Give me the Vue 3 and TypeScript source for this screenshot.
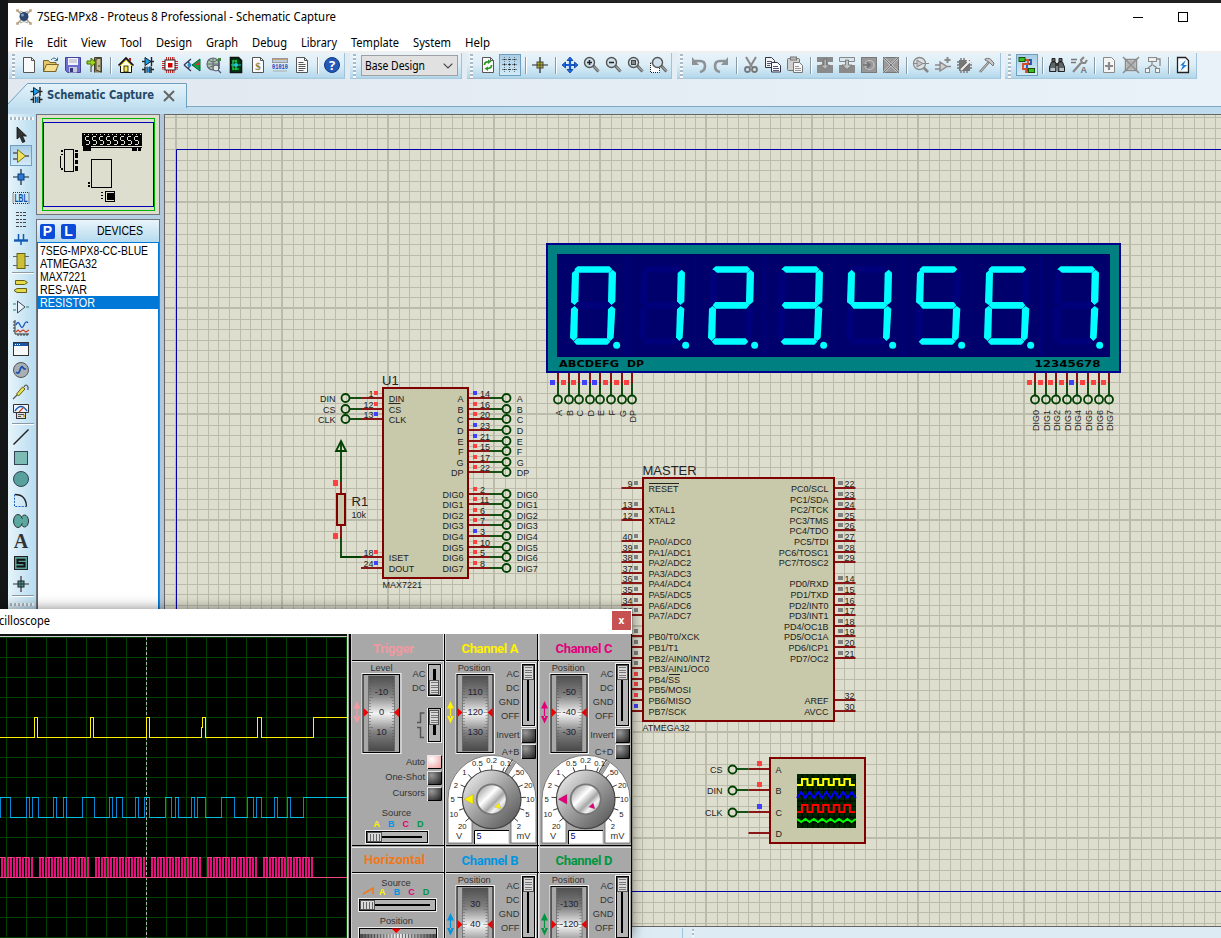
<script setup lang="ts">
import { h } from 'vue'

interface FitProps { t: string; w: number; size?: number; fill?: string; bold?: boolean; font?: string }

// Single line of text set to an exact width
const Fit = (p: FitProps) =>
  h('svg', { width: p.w, height: 18, viewBox: `0 0 ${p.w} 18`, style: 'display:block;overflow:visible' }, [
    h('text', {
      x: 0, y: 13, textLength: p.w, lengthAdjust: 'spacingAndGlyphs', fill: p.fill || '#000',
      'font-size': p.size || 12, 'font-weight': p.bold ? 700 : 400,
      'font-family': p.font || '"Noto Sans", "Open Sans", sans-serif',
    }, p.t),
  ])
Fit.props = ['t', 'w', 'size', 'fill', 'bold', 'font']

const menus: [string, number][] = [
  ['File', 18], ['Edit', 20], ['View', 25], ['Tool', 22], ['Design', 36], ['Graph', 32],
  ['Debug', 35], ['Library', 36], ['Template', 48], ['System', 38], ['Help', 25],
]

const page = '<path d="M2.5 .5h8l3 3v12h-11z" fill="#fafafa" stroke="#555"/><path d="M10.5 .5v3h3" fill="none" stroke="#555"/>'
const lens = (x: number, inner: string) =>
  `<path d="M${x + 4} 9l5 5.500" stroke="#666" stroke-width="3"/><path d="M${x + 4.5} 9.500l4.500 4.500" stroke="#c9c9c9" stroke-width="1"/><circle cx="${x}" cy="5.500" r="5" fill="#cfe0ea" stroke="#555" stroke-width="1.400"/>${inner}`

const icons: Record<string, string> = {
  new: page,
  open: '<path d="M.5 14.500v-11h5l1.500 2h6v9z" fill="#e6c468" stroke="#7a6428"/><path d="M.5 14.500l3-7h12l-3 7z" fill="#f7df90" stroke="#7a6428"/><path d="M8 3q3-4 6 0M14.500 .5v3h-3" fill="none" stroke="#3a6f92"/>',
  save: '<path d="M.5 .5h15v15h-13l-2-2z" fill="#6d6fd0" stroke="#44459a"/><rect x="3" y="1" width="10" height="7" fill="#f4f4ff"/><path d="M4 3h8M4 5h8" stroke="#aab"/><rect x="4" y="10" width="8" height="5.500" fill="#c8c8dc"/><rect x="5" y="11" width="3" height="4" fill="#33347a"/>',
  exit: '<path d="M7.500 15.500v-15h7v15" fill="#8a8060" stroke="#44402c"/><path d="M9 2l5-1v14l-5-2z" fill="#c6bc90" stroke="#44402c"/><path d="M0 4h4V1l5 4.500-5 4.500V7H0z" fill="#9bd61c" stroke="#456c08"/><path d="M4 10v5M12 8v2" stroke="#333"/>',
  home: '<path d="M2.500 8v7.500h11V8L8 2.500z" fill="#ffffd8" stroke="#111"/><path d="M.5 8.500L8 1l7.500 7.500" fill="none" stroke="#111" stroke-width="1.600"/><path d="M1.500 9.500L8 3l6.500 6.500" fill="none" stroke="#e0b000"/><rect x="6" y="9" width="4" height="6" fill="#f6e650" stroke="#111" stroke-width=".8"/><path d="M12 1v3" stroke="#b22" stroke-width="2"/>',
  schem: '<path d="M2 4.500h12" stroke="#222" stroke-width="1.400"/><path d="M5 .5v8l6-4z" fill="#18a0e8" stroke="#123"/><path d="M11.500 0v9" stroke="#222" stroke-width="1.400"/><path d="M2 12.500h3M11 12.500h3" stroke="#222" stroke-width="1.400"/><path d="M5 9.500v6.500M11 9.500v6.500" stroke="#222" stroke-width="1.500"/><rect x="6.500" y="10" width="3" height="5.500" fill="#2a90e0"/><path d="M7 9.500v6.500M9.500 9.500v6.500" stroke="#234" stroke-width=".8"/>',
  chip: '<path d="M4.500 0v16M6.500 0v16M8.500 0v16M10.500 0v16M12 0v16M0 4.500h16M0 6.500h16M0 8.500h16M0 10.500h16M0 12h16" stroke="#c01818" stroke-width=".9"/><rect x="3" y="3" width="10" height="10" fill="#fff" stroke="#222"/><rect x="6" y="6" width="4.500" height="4.500" fill="#d00000"/>',
  eye: '<path d="M0 8l7-6M0 8l7 6M4 4q3 4 0 8" fill="none" stroke="#335" stroke-width="1.300"/><circle cx="5.500" cy="8" r="2" fill="#2a8ac8"/><path d="M16 2v12l-8-6z" fill="#10a040" stroke="#064"/><path d="M16 4v4h-5z" fill="#d83030"/>',
  globe: '<circle cx="7" cy="7" r="6" fill="#a8c8a8" stroke="#667" stroke-width="1.200"/><path d="M1 7h12M7 1v12M3 3q4 4 8 0M3 11q4-4 8 0" stroke="#667" fill="none"/><circle cx="10" cy="11" r="3" fill="#dceadc" stroke="#557"/><path d="M12 13l3 3M13 2v10" stroke="#557" stroke-width="1.400"/><path d="M12 1h3v3h-3z" fill="#3a8a3a"/>',
  sim: '<path d="M2.500 .5h8l3 3v12h-11z" fill="#003a10" stroke="#111" stroke-width="1.600"/><path d="M5 3v10M5 4h4M5 12h6M8 3v3M8 10v3" stroke="#20e050" stroke-width="1.200"/><circle cx="8" cy="8" r="2" fill="#20c8d0"/><path d="M3 8h10" stroke="#20c8d0"/>',
  bill: page + '<text x="8" y="12.500" text-anchor="middle" font-size="11" font-weight="700" font-family="Liberation Serif, serif" fill="#9b7d2c">$</text>',
  code: '<rect x=".5" y="1.500" width="15" height="4" fill="#bcd" stroke="#999"/><path d="M1 2.500h14" stroke="#c8a070"/><text x="8" y="12" text-anchor="middle" textLength="16" lengthAdjust="spacingAndGlyphs" font-size="7" font-weight="700" font-family="Liberation Mono, monospace" fill="#2040b8">01010</text><path d="M1 14h14" stroke="#aaa"/>',
  doc: page + '<path d="M4.500 5.500h5M4.500 7.500h7M4.500 9.500h7M4.500 11.500h7M4.500 13.500h5" stroke="#555"/>',
  help: '<circle cx="8" cy="8" r="7.500" fill="#2358b8" stroke="#123a80"/><text x="8" y="12.700" text-anchor="middle" font-size="13" font-weight="700" font-family="Open Sans, sans-serif" fill="#fff">?</text>',
  refresh: page + '<path d="M4.500 8q0-3.500 4-3M11.500 8q0 3.500-4 3.500" fill="none" stroke="#2a9a20" stroke-width="1.700"/><path d="M8 2.500l3.500 2-3.500 2.500zM8 9.500l-3.500 2L8 14z" fill="#2a9a20"/>',
  grid: '<path d="M0 2.500h16M0 7.500h16M0 12.500h16M2.500 0v16M7.500 0v16M12.500 0v16" stroke="#6a7c88" stroke-dasharray="1 1"/><path d="M1.500 2.500h2M6.500 2.500h2M11.500 2.500h2M1.500 7.500h2M6.500 7.500h2M11.500 7.500h2M1.500 12.500h2M6.500 12.500h2M11.500 12.500h2" stroke="#222"/>',
  origin: '<path d="M8 0v16M0 8h16" stroke="#222" stroke-width="1.200"/><rect x="5" y="5" width="6" height="6" fill="#b8b020" stroke="#444"/><path d="M8 5v6M5 8h6" stroke="#333" stroke-width=".8"/>',
  pan: '<path d="M8 1v14M1 8h14" stroke="#1458d0" stroke-width="2.200"/><path d="M8 0l3 3.500H5zM8 16l3-3.500H5zM0 8l3.500-3v6zM16 8l-3.500-3v6z" fill="#1e6ae8" stroke="#0a3a90" stroke-width=".8"/>',
  zin: lens(5.5, '<path d="M3 5.500h5M5.500 3v5" stroke="#222" stroke-width="1.500"/>'),
  zout: lens(5.5, '<path d="M3 5.500h5" stroke="#222" stroke-width="1.500"/>'),
  zall: lens(5.5, '<rect x="3.500" y="3.500" width="4" height="4" fill="#888" stroke="#444"/>'),
  zarea: '<rect x=".5" y="6" width="9" height="9.500" fill="#fff" stroke="#222" stroke-dasharray="1 1"/>' + lens(7.5, ''),
  undo: '<path d="M4 4h5q5 0 5 5t-5 6" fill="none" stroke="#8d9296" stroke-width="2.600"/><path d="M1 0v8h7z" fill="#8d9296"/>',
  redo: '<path d="M12 4H7Q2 4 2 9t5 6" fill="none" stroke="#8d9296" stroke-width="2.600"/><path d="M15 0v8H8z" fill="#8d9296"/>',
  cut: '<path d="M3 0l6 10M13 0L7 10" stroke="#888" stroke-width="2"/><circle cx="4.500" cy="12.500" r="2.500" fill="none" stroke="#777" stroke-width="1.800"/><circle cx="11.500" cy="12.500" r="2.500" fill="none" stroke="#777" stroke-width="1.800"/>',
  copy: '<path d="M.5 .5h6l3 3v7h-9z" fill="#f4f4f4" stroke="#334"/><path d="M2 4.500h5M2 6.500h5M2 8.500h3" stroke="#557"/><path d="M6.500 5.500h6l3 3v6.500h-9z" fill="#fafafa" stroke="#334"/><path d="M8 9.500h5M8 11.500h6M8 13.500h6" stroke="#557"/>',
  paste: '<rect x=".5" y="1.500" width="12" height="12" rx="1" fill="#d0d0d0" stroke="#777"/><rect x="3.500" y="0" width="6" height="3" fill="#bbb" stroke="#777"/><path d="M6.500 5.500h6l3 3v7h-9z" fill="#f6f6f6" stroke="#777"/><path d="M8 9.500h4M8 11.500h6M8 13.500h6" stroke="#999"/>',
  blkcopy: '<path d="M0 0h16v5h-5v3h5v8H0V8h5V5H0z" fill="#8a8a8a"/><path d="M0 5h5v3H0zM11 5h5v3h-5z" fill="#dceaf2"/><path d="M7 2h2.500v6h3L8 12.500 3.500 8H7z" fill="#b4b4b4" stroke="#6c6c6c" stroke-width=".8"/>',
  blkmove: '<path d="M.5 .5h15v4H.5z" fill="#d8e6ee" stroke="#888"/><path d="M0 8h16v8H0z" fill="#8a8a8a"/><path d="M6.500 3h3v5h3.500L8 12.500 3 8h3.500z" fill="#c4c4c4" stroke="#6c6c6c" stroke-width=".8"/>',
  blkrot: '<rect x=".5" y=".5" width="15" height="15" fill="#979797" stroke="#7a7a7a"/><circle cx="8.500" cy="8" r="4.500" fill="none" stroke="#c4c4c4" stroke-width="1.200"/><path d="M2 8h7M6 5l3 3-3 3" stroke="#707070" stroke-width="1.400" fill="none"/>',
  blkdel: '<rect x=".5" y=".5" width="15" height="15" fill="#9a9a9a" stroke="#777"/><path d="M1 1l14 14M15 1L1 15" stroke="#c4c4c4" stroke-width="2.400"/><path d="M1 1l14 14M15 1L1 15" stroke="#777"/>',
  pick: '<path d="M10 10l5 5" stroke="#888" stroke-width="2.600"/><circle cx="6.500" cy="6.500" r="6" fill="#dce4e8" stroke="#8a8a8a" stroke-width="1.300"/><path d="M4 3v7l6-3.500zM0 6.500h4M10 6.500h6" stroke="#888" fill="#c4c4c4"/>',
  make: '<path d="M5 5v9l7-4.500zM0 8h5M0 12h5M12 9.500h4" stroke="#8a8a8a" stroke-width="1.400" fill="#cfcfcf"/><path d="M12.500 0v6M9.500 3h6" stroke="#8a8a8a" stroke-width="2"/>',
  pack: '<path d="M2 3h11v11H2z" fill="#777"/><path d="M0 5h2M0 8h2M0 11h2M13 5h2M13 8h2M13 11h2M4 1v2M7 1v2M4 14v2M7 14v2M10 14v2" stroke="#777" stroke-width="1.400"/><path d="M4 13l8-8" stroke="#666" stroke-width="3.600"/><path d="M4 13l8-8M12 .5l-1.500 4 1 1 4-1.500" stroke="#efefef" stroke-width="2" fill="none"/>',
  decomp: '<path d="M1 15l9-10" stroke="#777" stroke-width="2.600"/><path d="M1.500 14.500l8-9" stroke="#ccc"/><path d="M6 2q5-2 7 2l2 2-1 3-4-4-4-2z" fill="#c8c8c8" stroke="#777"/>',
  wire: '<path d="M8 3h4v4H8v7h5" fill="none" stroke="#1a56b8" stroke-width="1.800"/><path d="M6 3h3v4H4v5h3v3h3" fill="none" stroke="#d84a28" stroke-width="1.800"/><rect x="0" y=".5" width="6" height="4" fill="#3cc020" stroke="#145008"/><rect x="9.500" y="11.500" width="6" height="4" fill="#3cc020" stroke="#145008"/>',
  binoc: '<path d="M3 1.500h3v3H3zM10 1.500h3v3h-3z" fill="#666" stroke="#222"/><path d="M2.500 5h4l.5 4v5.500H.5V10zM9.500 5h4l2 5v4.500H9V9z" fill="#5c6468" stroke="#222"/><path d="M6.500 6h3v3h-3z" fill="#333"/><path d="M1.500 11h4.500v3H1.500zM10.500 11H15v3h-4.500z" fill="#b8c4c8"/>',
  prop: '<path d="M0 2.500h6M0 5.500h5" stroke="#777" stroke-width="1.300"/><path d="M2 15l8-9M13 0l-3 3 1 3 3 0 2-3" stroke="#888" stroke-width="2.200" fill="none"/><text x="9.500" y="16" font-size="9" font-weight="700" font-family="Liberation Sans, sans-serif" fill="#777">A</text>',
  addsheet: '<path d="M2.500 .5h8l3 3v12h-11z" fill="#f4f4f4" stroke="#8a8a8a"/><path d="M8 5v8M4 9h8" stroke="#8a8a8a" stroke-width="2.200"/>',
  delsheet: '<rect x="2.500" y="2.500" width="11" height="11" fill="#ccc" stroke="#8a8a8a" stroke-width="1.400"/><path d="M0 0l16 16M16 0L0 16" stroke="#8a8a8a" stroke-width="1.500"/><rect x="5" y="5" width="6" height="6" fill="none" stroke="#999"/>',
  hier: '<rect x="3.500" y=".5" width="8" height="4" fill="#eee" stroke="#888"/><path d="M7 5v3L3 11M8 8l4 3M11 2h4v7" fill="none" stroke="#888" stroke-width="1.300"/><rect x=".5" y="11.500" width="4" height="4" fill="#f4f4f4" stroke="#888"/><rect x="10.500" y="11.500" width="4" height="4" fill="#f4f4f4" stroke="#888"/>',
  erc: '<path d="M2.500 .5h8l3 3v12h-11z" fill="#f6fbff" stroke="#222" stroke-width="1.300"/><path d="M11 3L5 8.500h3L5.500 14 12 8H8.500z" fill="#1a7ad8"/>',
  arrow: '<path d="M4 0v12l3-2.500 2.500 6 2.500-1-2.500-5.500h4z" fill="#333" stroke="#111" stroke-width=".8"/>',
  comp: '<path d="M0 5h4M0 11h4M12 8h4" stroke="#556" stroke-width="1.400"/><path d="M4.500 1.500v13L12.500 8z" fill="#f0e25a" stroke="#77701a"/>',
  junc: '<path d="M8 0v16M0 8h16" stroke="#123" stroke-width="1.200"/><rect x="5" y="5" width="6" height="6" fill="#2a7ad0" stroke="#0a3a80"/>',
  lbl: '<rect x="0" y="2.500" width="16" height="11" fill="none" stroke="#333" stroke-dasharray="1 1"/><text x="8" y="11.800" text-anchor="middle" textLength="13" lengthAdjust="spacingAndGlyphs" font-size="10" font-weight="700" font-family="Liberation Sans, sans-serif" fill="#0a4aa8">LBL</text>',
  script: '<path d="M3 1.500h11M3 4.500h11M3 8.500h11M3 11.500h11M3 15.500h11" stroke="#444" stroke-dasharray="3 1 2 1"/>',
  bus: '<path d="M1 8.500h14" stroke="#1258b8" stroke-width="2.400"/><path d="M5.500 2v6M10.500 2v6M8 8v5" stroke="#1258b8" stroke-width="1.500"/>',
  sub: '<path d="M0 3.500h16M0 12.500h16" stroke="#666"/><rect x="4" y=".5" width="8" height="15" fill="#c9c038" stroke="#666018"/>',
  term: '<path d="M2.500 2.500h9l3 2-3 2h-9zM4 10.500h9.500v4H4l-3-2z" fill="#e4d84c" stroke="#665f14"/>',
  pin: '<path d="M0 5h3M0 11h3M13 8h3" stroke="#286" stroke-width="1.200"/><path d="M4.500 2v12L12 8z" fill="#e8f4fa" stroke="#445"/>',
  graph: '<path d="M2 0v14h14M0 2h2M0 5h2M0 8h2M0 11h2M5 14v2M8 14v2M11 14v2M14 14v2" stroke="#333" fill="none"/><path d="M3 5q2-5 4 0t4 0 4-2" fill="none" stroke="#1a56b8" stroke-width="1.300"/><path d="M3 12l2-2 2 2 3-2 3 2 3-2" fill="none" stroke="#d04020" stroke-width="1.200"/>',
  popup: '<rect x=".5" y="1.500" width="15" height="13" fill="#f8f8f8" stroke="#333"/><path d="M1 3.500h14" stroke="#1a56a8" stroke-width="3"/><path d="M2 3.500h5" stroke="#fff" stroke-dasharray="1 1"/>',
  gen: '<circle cx="8" cy="8" r="7.500" fill="#a8b0b4" stroke="#555"/><path d="M3 10q2.500 3 4-2t3-2.500T13 6.500" fill="none" stroke="#1a50b0" stroke-width="1.700"/>',
  probe: '<path d="M0 16l5-5M11 4q2-4 4 0v3" fill="none" stroke="#555" stroke-width="1.200"/><path d="M3.500 11l6-7 2.500 2-6.500 7z" fill="#e8e050" stroke="#666018"/>',
  instr: '<path d="M.5 .5h15v8h-3v6h-9v-6h-3z" fill="#f0f4f6" stroke="#333"/><path d="M2 7q6-9 12 0" fill="none" stroke="#1a60c0" stroke-width="1.500"/><path d="M6 8l5-5" stroke="#d04020" stroke-width="1.300"/><rect x="3.500" y="8.500" width="9" height="6" fill="#ddd" stroke="#333"/><path d="M5 10.500h6M5 12.500h3" stroke="#555"/><path d="M10 12h2" stroke="#d8b000" stroke-width="2"/>',
  line: '<path d="M.5 15.500l15-15" stroke="#222" stroke-width="1.400"/>',
  box: '<rect x="1.500" y="1.500" width="13" height="13" fill="#7cbcb4" stroke="#345"/>',
  circ: '<circle cx="8" cy="8" r="7.500" fill="#58a09c" stroke="#345"/>',
  arc: '<path d="M1.500 2.500v12h12" fill="none" stroke="#1a60b8" stroke-dasharray="2 1.200"/><path d="M2 2.500q11 0 11.500 12" fill="none" stroke="#222" stroke-width="1.300"/>',
  path: '<ellipse cx="11.500" cy="8" rx="4" ry="6" fill="#5aa8a0" stroke="#333"/><ellipse cx="5" cy="8" rx="4.500" ry="6.500" fill="#5aa8a0" stroke="#333"/><path d="M7 6h3v4H7z" fill="#5aa8a0"/>',
  text: '<text x="8" y="14" text-anchor="middle" font-size="20" font-weight="700" font-family="Liberation Serif, serif" fill="#333">A</text>',
  sym: '<rect x="1.500" y="1.500" width="13" height="13" fill="#5aa098" stroke="#222"/><path d="M12.500 4.700h-8v3.300h7v3.500h-8" fill="none" stroke="#111" stroke-width="2"/>',
  mark: '<path d="M8 0v16M0 8h16" stroke="#333" stroke-width="1.200"/><rect x="5" y="5" width="6" height="6" fill="#4a9c94" stroke="#222"/><path d="M5 8h6M8 5v6" stroke="#222" stroke-width=".8"/>',
}

const bars = [
  { w: 336, pad: 0, items: ['new', 'open', 'save', 'exit', '||', 'home', 'schem', 'chip', 'eye', 'globe', 'sim', 'bill', 'code', 'doc', '|', 'help'], gap: 5 },
  { w: 112, pad: 0, items: ['combo'], gap: 5 },
  { w: 205, pad: 1, items: ['refresh', '*grid', '|', 'origin', '|', 'pan', 'zin', 'zout', 'zall', 'zarea'], gap: 5 },
  { w: 324, pad: 2, items: ['undo', 'redo', '|', 'cut', 'copy', 'paste', '|', 'blkcopy', 'blkmove', 'blkrot', 'blkdel', '|', 'pick', 'make', 'pack', 'decomp'], gap: 4 },
  { w: 192, pad: 2, items: ['*wire', '|', 'binoc', 'prop', '|', 'addsheet', 'delsheet', 'hier', '|', 'erc'], gap: 0 },
]

const tools = ['arrow', '*comp', 'junc', 'lbl', 'script', 'bus', 'sub', '|', 'term', 'pin', 'graph', 'popup', 'gen', 'probe', 'instr', '|',
  'line', 'box', 'circ', 'arc', 'path', 'text', 'sym', 'mark', '|']

const devices: [string, number][] = [['7SEG-MPX8-CC-BLUE', 108], ['ATMEGA32', 57], ['MAX7221', 46], ['RES-VAR', 47], ['RESISTOR', 55]]

// Sheet grid
const gx: { p: number; w: number }[] = []
for (let k = -60; k < 40; k++) {
  const p = Math.round(812 + k * 10.6)
  if (p > 165 && p < 1222) gx.push({ p: k % 10 === 0 ? 811 + Math.round(k * 10.6) : p, w: k % 10 === 0 ? 2 : 1 })
}
const gy: { p: number; w: number }[] = []
for (let k = -30; k < 50; k++) {
  const p = Math.round(414 + k * 10.6)
  if (p > 114 && p < 926) gy.push({ p: k % 10 === 0 ? p - 1 : p, w: k % 10 === 0 ? 2 : 1 })
}

const R = '#ff4040', B = '#4040ff', G = '#808080'
const py = (base: number, k: number) => Math.round(base + k * 10.6)

const u1Right = 'A:14:B B:16:R C:20:R D:23:B E:21:B F:15:R G:17:R DP:22:R _ DIG0:2:R DIG1:11:R DIG2:6:R DIG3:7:R DIG4:3:B DIG5:10:R DIG6:5:R DIG7:8:R'
  .split(' ').map((s, k) => { const [n, num, c] = s.split(':'); return { n, num, c: c === 'B' ? B : R, y: py(398.2, k) } }).filter(p => p.num)
const u1Left = [
  { n: 'DIN', num: '1', c: R, k: 0, net: 'DIN' }, { n: 'CS', num: '12', c: R, k: 1, net: 'CS' }, { n: 'CLK', num: '13', c: B, k: 2, net: 'CLK' },
  { n: 'ISET', num: '18', c: R, k: 15, net: '' }, { n: 'DOUT', num: '24', c: B, k: 16, net: '' },
].map(p => ({ ...p, y: py(398.2, p.k) }))

const mL = ('RESET:9 _ XTAL1:13 XTAL2:12 _ PA0/ADC0:40 PA1/ADC1:39 PA2/ADC2:38 PA3/ADC3:37 PA4/ADC4:36 PA5/ADC5:35 PA6/ADC6:34 PA7/ADC7:33 _ ' +
  'PB0/T0/XCK PB1/T1 PB2/AIN0/INT2 PB3/AIN1/OC0 PB4/SS PB5/MOSI PB6/MISO PB7/SCK').split(' ')
  .map((s, k) => { const [n, num] = s.split(':'); return { n, num: num || '', y: py(488, k), c: k === 21 ? B : k >= 18 ? R : G } }).filter(p => p.n !== '_')
const mR = ('PC0/SCL:22 PC1/SDA:23 PC2/TCK:24 PC3/TMS:25 PC4/TDO:26 PC5/TDI:27 PC6/TOSC1:28 PC7/TOSC2:29 _ ' +
  'PD0/RXD:14 PD1/TXD:15 PD2/INT0:16 PD3/INT1:17 PD4/OC1B:18 PD5/OC1A:19 PD6/ICP1:20 PD7/OC2:21 _ _ _ AREF:32 AVCC:30').split(' ')
  .map((s, k) => { const [n, num] = s.split(':'); return { n, num, y: py(488, k), sq: k < 20 } }).filter(p => p.n !== '_')

const segs: Record<string, string> = {
  a: '103,103 113,94 208,94 217,103 208,113 115,113',
  b: '218,104 228,113 226,200 214,210 204,201 206,114',
  c: '215,213 226,221 221,308 211,318 201,309 204,222',
  d: '101,320 111,310 203,310 211,320 202,329 110,329',
  e: '104,213 114,222 112,307 101,318 90,308 93,221',
  f: '107,104 117,114 115,202 104,210 93,202 96,114',
  g: '104,211 112,201 206,201 214,211 205,221 113,221',
}
const digits = ['abcdef', 'bc', 'abdeg', 'abcdg', 'bcfg', 'acdfg', 'acdefg', 'abc']

const dispPins = [
  ...['A', 'B', 'C', 'D', 'E', 'F', 'G', 'DP'].map((n, i) => ({ n, x: py(558, i), c: 'ADE'.includes(n) ? B : R })),
  ...[0, 1, 2, 3, 4, 5, 6, 7].map(i => ({ n: 'DIG' + i, x: py(1035, i), c: i === 4 ? B : R })),
]
const oscPins = [{ n: 'A', net: 'CS', y: 769, c: R }, { n: 'B', net: 'DIN', y: 790, c: R }, { n: 'C', net: 'CLK', y: 812, c: B }, { n: 'D', net: '', y: 833, c: '' }]

const square = (x0: number, n: number, hi: number, lo: number) => {
  let d = `M${x0} ${lo}h5`
  for (let i = 0; i < n; i++) d += `V${hi}h5.500V${lo}h${i === n - 1 ? 5 : 5.1}`
  return d
}
const zig = (x0: number, n: number, step: number, y0: number, y1: number) =>
  'M' + Array.from({ length: n }, (_, i) => `${x0 + i * step} ${i % 2 ? y1 : y0}`).join('L')

// Oscilloscope traces
const t3 = (v: number) => v / 3
const yellow = (() => {
  let d = 'M0 737.5'
  for (const [a, b] of [[103, 112], [271, 280], [440, 448], [606, 616], [772, 784]]) {
    const x = Math.floor(t3(a)) + 0.5, x2 = Math.floor(t3(b)) + 0.5
    d += a === 606 ? `H${x - 1}V727.5H${x}V717.5H${x2}V737.5` : `H${x}V717.5H${x2}V737.5`
  }
  return d + 'H313.5V717.5H347'
})()
const blueHi = [[1, 31], [79, 88], [97, 115], [160, 169], [190, 199], [247, 283], [328, 337], [349, 367], [406, 415], [433, 448], [496, 515],
  [526, 535], [575, 583], [592, 617], [664, 703], [742, 760], [769, 784], [823, 832], [862, 871], [910, 1038]].map(p => p.map(v => Math.floor(t3(v))))
const blueLo = blueHi.slice(1).map((p, i) => [blueHi[i][1], p[0]])
const clocks = [[-52, 98], [117, 267], [285, 435], [453, 603], [621, 771], [789, 939]].flatMap(([a, b]) =>
  Array.from({ length: 17 }, (_, i) => ({ x: Math.round(a / 3) + i * 3, w: 2 })))

const range = (n: number) => Array.from({ length: n }, (_, i) => i)

const channels = [
  { n: 'A', c: '#fff200', dx: 0, dy: 0, v: ['110', '120', '130'], mix: 'A+B' },
  { n: 'C', c: '#e2007a', dx: 94, dy: 0, v: ['-50', '-40', '-30'], mix: 'C+D' },
  { n: 'B', c: '#0095e0', dx: 0, dy: 212, v: ['30', '40'], mix: '' },
  { n: 'D', c: '#009640', dx: 94, dy: 212, v: ['-130', '-120'], mix: '' },
]
const dials = [
  { x: 362.5, w: 38, dy: 0, v: ['-10', '0', '10'], c: '#f49aa2', ax: 357 },
  ...channels.map(c => ({ x: 456.5 + c.dx, w: 37.5, dy: c.dy, v: c.v, c: c.c, ax: 450.5 + c.dx })),
]
const dialMarks: [string, number, number][] = [
  ['0.5', 397, 474], ['0.2', 440, 466], ['0.1', 482, 474], ['50', 525, 502], ['20', 550, 541], ['10', 556, 583], ['5', 547, 627],
  ['2', 522, 663], ['1', 358, 502], ['2', 333, 541], ['5', 323, 583], ['10', 326, 627], ['20', 352, 663],
]
const ticks = range(13).map(i => -220 + i * (260 / 12))
const letters = [['A', '#fff200'], ['B', '#0095e0'], ['C', '#e2007a'], ['D', '#009640']]
const trigButtons: [string, number, number][] = [['Auto', 755, 765], ['One-Shot', 771, 779.7], ['Cursors', 787, 795.7]]
</script>

<template>
  <div class="desk">
    <div class="window">
      <header class="title">
        <svg class="logo" width="16" height="16" viewBox="0 0 16 16">
          <path d="M1 1l14 14M15 1L1 15" stroke="#b09a78" stroke-width="1.600" />
          <path d="M4 2q4 3 8 0M4 14q4-3 8 0" stroke="#9aa" fill="none" />
          <circle cx="8" cy="7.500" r="4.500" fill="#2c466e" /><circle cx="6.500" cy="6" r="1.500" fill="#7d9cc4" />
          <path d="M0 0h3v3H0zM13 0h3v3h-3zM0 13h3v3H0zM13 13h3v3h-3z" fill="#b8a078" opacity=".6" />
        </svg>
        <Fit t="7SEG-MPx8 - Proteus 8 Professional - Schematic Capture" :w="299" />
        <span class="spacer"></span>
        <svg class="winbtns" width="60" height="14" viewBox="0 0 60 14"><path d="M0 7.500h10" stroke="#000" /><rect x="45.500" y="2.500" width="9" height="9" fill="none" stroke="#000" /></svg>
      </header>
      <nav class="menu"><Fit v-for="m in menus" :key="m[0]" :t="m[0]" :w="m[1]" /></nav>
      <div class="bars">
        <div v-for="(b, i) in bars" :key="i" class="bar" :style="{ width: b.w + 'px', marginRight: b.gap + 'px' }">
          <span class="grip" :style="{ marginRight: 3 + b.pad + 'px' }"></span>
          <template v-for="(it, j) in b.items" :key="j">
            <span v-if="it[0] === '|'" class="sep" :class="{ wide: it === '||' }"></span>
            <span v-else-if="it === 'combo'" class="combo">
              <Fit t="Base Design" :w="60" />
              <svg width="10" height="6" viewBox="0 0 10 6"><path d="M.7 .7L5 5 9.300 .7" fill="none" stroke="#444" stroke-width="1.200" /></svg>
            </span>
            <span v-else class="cell" :class="{ on: it[0] === '*' }">
              <svg width="16" height="16" viewBox="0 0 16 16" v-html="icons[it.replace('*', '')]"></svg>
            </span>
          </template>
        </div>
      </div>
      <div class="tabs">
        <div class="tab">
          <svg class="tabshape" width="179" height="25" viewBox="0 0 179 25">
            <defs><linearGradient id="tg" x2="0" y2="1"><stop offset="0" stop-color="#e6f3fa" /><stop offset="1" stop-color="#bfdff0" /></linearGradient></defs>
            <path d="M0 25V21L19.500 .5H178.500V25" fill="url(#tg)" /><path d="M0 21L19.500 .5H178.500V25" fill="none" stroke="#6f9fbe" />
          </svg>
          <span class="tabin">
            <svg width="13" height="16" viewBox="1.500 0 13 16" v-html="icons.schem"></svg>
            <Fit t="Schematic Capture" :w="107" :bold="true" fill="#24486a" :size="11.500" font='"DejaVu Sans", sans-serif' />
            <svg width="12" height="12" viewBox="0 0 12 12"><path d="M1 1l10 10M11 1L1 11" stroke="#666" stroke-width="2" /></svg>
          </span>
        </div>
      </div>
      <div class="strip"></div>
      <main class="body">
        <aside class="tools">
          <span class="hgrip"></span>
          <template v-for="(it, j) in tools" :key="j">
            <span v-if="it === '|'" class="hsep"></span>
            <span v-else class="tcell" :class="{ on: it[0] === '*' }">
              <svg width="16" height="16" viewBox="0 0 16 16" v-html="icons[it.replace('*', '')]"></svg>
            </span>
          </template>
          <span class="hgrip low"></span>
        </aside>
        <section class="side">
          <svg class="overview" width="122" height="99" viewBox="37 115 122 99" shape-rendering="crispEdges">
            <rect x="42.500" y="118.500" width="112" height="92" fill="none" stroke="#00b400" />
            <rect x="43.500" y="122.500" width="110" height="84" fill="none" stroke="#0000b4" />
            <path d="M82 133h60v13H82zM83 146h8v5h-8zM132 148h5v3h-5zM138 148h3v3h-3z" />
            <path d="M91 147.500h51" stroke="#000" />
            <path d="M84 134.500h57" stroke="#dedece" stroke-dasharray="1 3" />
            <g v-for="i in 8" :key="i" stroke="#dedece"><path :d="`M${78.500 + i * 7} 137v3M${82.500 + i * 7} 141v3M${79 + i * 7} 140.500h3M${79 + i * 7} 136.500h3M${79 + i * 7} 144.500h3`" /></g>
            <rect x="64.500" y="149.500" width="9" height="22" fill="none" stroke="#000" />
            <path d="M61 150h2v2h-2zM60 156h1v12h-1zM61 154h2v1h-2zM61 168h2v2h-2zM75 150h3v2h-3zM75 153h3v5h-3zM75 160h3v4h-3zM75 166h3v5h-3z" />
            <rect x="91.500" y="159.500" width="20" height="28" fill="none" stroke="#000" />
            <path d="M88 182h2v2h-2zM88 185h2v2h-2zM101 192h2v1h-2zM101 195h2v1h-2zM101 198h2v1h-2z" />
            <rect x="105.500" y="191.500" width="9" height="10" fill="none" stroke="#000" /><path d="M107 193h7v7h-7z" />
          </svg>
          <div class="devices">
            <div class="dhead"><b>P</b><b>L</b><Fit t="DEVICES" :w="46" font='"Liberation Sans", sans-serif' /></div>
            <ul>
              <li v-for="(d, i) in devices" :key="d[0]" :class="{ sel: i === 4 }">
                <Fit :t="d[0]" :w="d[1]" :fill="i === 4 ? '#fff' : '#000'" font='"Liberation Sans", sans-serif' />
              </li>
            </ul>
          </div>
        </section>
        <div class="split"></div>
        <section class="right">
          <svg class="sheet" width="1056" height="811" viewBox="165 115 1056 811">
            <g shape-rendering="crispEdges" fill="#bbbbab">
              <rect v-for="g in gx" :key="'x' + g.p" :x="g.p" y="115" :width="g.w" height="811" />
              <rect v-for="g in gy" :key="'y' + g.p" x="165" :y="g.p" width="1056" :height="g.w" />
            </g>
            <path d="M1221 149.500H176.500V891.500H1221" fill="none" stroke="#0000a8" />

            <g class="part">
              <rect x="383" y="388" width="85" height="190" />
              <text x="382" y="385" class="big">U1</text><text x="382.500" y="588">MAX7221</text>
              <g v-for="p in u1Left" :key="p.n">
                <path class="r" :d="`M361 ${p.y}H383`" />
                <text x="373.500" :y="p.y - 1.500" class="e">{{ p.num }}</text>
                <path :d="`M374 ${p.y - 7}h4v4h-4z`" :fill="p.c" />
                <text x="388.700" :y="p.y + 3.500">{{ p.n }}</text>
                <template v-if="p.net"><path class="g" :d="`M350 ${p.y}H361`" /><circle cx="345.500" :cy="p.y" r="4" /><text x="335.500" :y="p.y + 3.500" class="e">{{ p.net }}</text></template>
              </g>
              <path d="M388.500 403.500h12" stroke="#222" />
              <g v-for="p in u1Right" :key="p.n">
                <path class="r" :d="`M469 ${p.y}H490`" /><path class="g" :d="`M490 ${p.y}H502.500`" />
                <circle cx="506.500" :cy="p.y" r="4" />
                <text x="480" :y="p.y - 1.500">{{ p.num }}</text>
                <path :d="`M473 ${p.y - 7}h4v4h-4z`" :fill="p.c" />
                <text x="463.500" :y="p.y + 3.500" class="e">{{ p.n }}</text><text x="516.700" :y="p.y + 3.500">{{ p.n }}</text>
              </g>
              <path class="g" d="M341 441V482M341 537V557H361" /><path class="g" d="M341 441l5 10h-10z" />
              <path class="r" d="M341 482V494M341 525V538" /><rect x="337" y="494" width="8" height="31" />
              <path d="M333 480h5v6h-5zM333 533h5v6h-5z" fill="#ff4040" />
              <text x="351.500" y="506" class="big">R1</text><text x="351.500" y="517.700">10k</text>
            </g>

            <g>
              <rect x="547" y="244" width="573" height="128" fill="#008080" stroke="#00008c" stroke-width="2" />
              <rect x="557.500" y="254.500" width="552" height="102" fill="#00006c" stroke="#000060" />
              <path v-for="i in 7" :key="i" :d="`M${557 + i * 69}.500 255V356`" stroke="#00007c" />
              <g v-for="(d, i) in digits" :key="'d' + i" :transform="`translate(${540 + i * 69} 235) scale(.33333)`">
                <polygon v-for="(pts, s) in segs" :key="s" :points="pts" :fill="d.includes(String(s)) ? '#00ffff' : '#00007a'" />
                <circle cx="230" cy="331" r="10.500" fill="#00ffff" />
              </g>
              <g class="lab">
                <text x="559" y="366.500" textLength="60" lengthAdjust="spacingAndGlyphs">ABCDEFG</text><text x="627" y="366.500" textLength="17" lengthAdjust="spacingAndGlyphs">DP</text>
                <text x="1034.500" y="366.800" textLength="66" lengthAdjust="spacingAndGlyphs">12345678</text>
              </g>
              <g v-for="p in dispPins" :key="p.n" class="part">
                <path class="r" :d="`M${p.x} 373V383`" /><path class="g" :d="`M${p.x} 383V395`" /><circle :cx="p.x" cy="399.500" r="4" />
                <path :d="`M${p.x - 8} 380h5v5h-5z`" :fill="p.c" />
                <text class="e" :transform="`translate(${p.x + 3.500} 410) rotate(-90)`">{{ p.n }}</text>
              </g>
            </g>

            <g class="part">
              <rect x="643" y="478" width="191" height="243" />
              <text x="642.500" y="475" class="big">MASTER</text><text x="642.500" y="731">ATMEGA32</text>
              <g v-for="p in mL" :key="p.n">
                <path class="r" :d="`M621.500 ${p.y}H642`" /><text x="632.500" :y="p.y - 1.500" class="e">{{ p.num }}</text>
                <path :d="`M634 ${p.y - 7}h4v4h-4z`" :fill="p.c" /><text x="648.500" :y="p.y + 3.500">{{ p.n }}</text>
              </g>
              <path d="M649 483.500h30M669 674.500h11" stroke="#222" />
              <g v-for="p in mR" :key="p.n">
                <path class="r" :d="`M835 ${p.y}H855.500`" /><text x="844.500" :y="p.y - 1.500">{{ p.num }}</text>
                <path v-if="p.sq" :d="`M838 ${p.y - 7}h5v4h-5z`" fill="#808080" /><text x="828.500" :y="p.y + 3.500" class="e">{{ p.n }}</text>
              </g>
            </g>

            <g class="part">
              <rect x="770" y="758" width="95" height="85" />
              <g v-for="p in oscPins" :key="p.n">
                <path class="r" :d="`M748.500 ${p.y}H769`" /><text x="775.500" :y="p.y + 4">{{ p.n }}</text>
                <template v-if="p.net">
                  <path class="g" :d="`M737 ${p.y}H748.500`" /><circle cx="732.500" :cy="p.y + .5" r="4" />
                  <text x="722.500" :y="p.y + 4" class="e">{{ p.net }}</text><path :d="`M757 ${p.y - 8}h5v5h-5z`" :fill="p.c" />
                </template>
              </g>
              <path d="M797 774h59v54h-59z" fill="#002800" />
              <path v-for="i in 10" :key="'v' + i" :d="`M${797 + i * 5.300} 774v54`" stroke="#000" />
              <path v-for="i in 9" :key="'h' + i" :d="`M797 ${774 + i * 5.400}h59`" stroke="#000" />
              <g fill="none" stroke-width="2">
                <path :d="square(797, 5, 779, 785)" stroke="#ff0" /><path :d="zig(797, 15, 4.200, 798, 792)" stroke="#00f" />
                <path :d="square(797, 5, 805, 812)" stroke="#f00" /><path :d="zig(797, 15, 4.200, 819, 822)" stroke="#0f0" />
              </g>
            </g>
          </svg>
          <footer class="status"><i></i><span class="sgrip"></span></footer>
        </section>
      </main>
    </div>

    <div class="scope">
      <div class="stitle"><Fit t="cilloscope" :w="51" /><span class="close">x</span></div>
      <div class="sbody">
        <svg width="350" height="304" viewBox="0 634 350 304" shape-rendering="crispEdges">
          <rect y="634" width="350" height="304" fill="#a0a0a0" /><rect y="634" width="347" height="2" fill="#111" /><rect y="636" width="346" height="1" fill="#c8c8c8" />
          <rect y="637" width="347" height="301" fill="#000" />
          <path v-for="i in 18" :key="'v' + i" :d="`M${i * 20 - 13.500} 637V938`" stroke="#004000" />
          <path v-for="i in 16" :key="'h' + i" :d="`M0 ${617.500 + i * 20}H347`" stroke="#004000" />
          <path d="M146.500 637V938" stroke="#b0b0b0" stroke-dasharray="3 2" />
          <path d="M347.500 634V938" stroke="#ddd" /><path d="M349.500 634V938" stroke="#000" />
          <path :d="yellow" fill="none" stroke="#fff200" />
          <template v-for="(p, i) in blueHi" :key="'b' + i">
            <path :d="`M${p[0]}.500 797V818` + (i < blueHi.length - 1 ? `M${p[1]}.500 797V818` : '')" stroke="#0a84d0" /><path :d="`M${p[0]} 797.500H${p[1] + 1}`" stroke="#00c0e0" />
          </template>
          <path v-for="(p, i) in blueLo" :key="'l' + i" :d="`M${p[0]} 817.500H${p[1] + 1}`" stroke="#00c0e0" />
          <rect v-for="(p, i) in clocks" :key="'c' + i" :x="p.x" y="857" :width="p.w" height="21" fill="#e2107c" />
          <path d="M0 877.500H347" stroke="#f04880" /><path d="M39 857.500H89M95 857.500H145M151 857.500H201M207 857.500H257M263 857.500H313M0 857.500H33" stroke="#f04880" stroke-dasharray="5 3" />
        </svg>
        <svg class="panel" width="282" height="304" viewBox="350 634 282 304">
          <defs>
            <linearGradient id="drum" x2="0" y2="1"><stop offset="0" stop-color="#505050" /><stop offset=".25" stop-color="#808080" /><stop offset=".5" stop-color="#f4f4f4" /><stop offset=".75" stop-color="#808080" /><stop offset="1" stop-color="#484848" /></linearGradient>
            <linearGradient id="hdrum"><stop offset="0" stop-color="#505050" /><stop offset=".5" stop-color="#f4f4f4" /><stop offset="1" stop-color="#505050" /></linearGradient>
            <linearGradient id="knob" x2="1" y2="1"><stop offset=".1" stop-color="#e8e8e8" /><stop offset=".5" stop-color="#9c9c9c" /><stop offset=".9" stop-color="#5c5c5c" /></linearGradient>
            <linearGradient id="cap" x2="1" y2="1"><stop offset=".1" stop-color="#a0a0a0" /><stop offset=".4" stop-color="#fff" /><stop offset=".6" stop-color="#a8a8a8" /><stop offset=".72" stop-color="#f4f4f4" /><stop offset="1" stop-color="#888" /></linearGradient>
            <radialGradient id="btn" cx=".3" cy=".3" r=".9"><stop offset="0" stop-color="#999" /><stop offset="1" stop-color="#222" /></radialGradient>
            <radialGradient id="lit" cx=".3" cy=".3" r=".9"><stop offset="0" stop-color="#fff" /><stop offset="1" stop-color="#f0a0a0" /></radialGradient>
          </defs>
          <rect x="350" y="634" width="282" height="304" fill="#a8a8a8" />
          <g shape-rendering="crispEdges">
            <path d="M443.500 634V938M538.500 634V938M351 661.500H631M351 847.500H631M351 873.500H631" stroke="#e8e8e8" />
            <path d="M350.500 634V938M444.500 634V938M537.500 634V938M631.500 634V938M351 660.500H631M351 845.500H631M351 872.500H631" stroke="#000" />
            <path d="M351.500 634V938M445.500 634V938M539.500 634V938" stroke="#d0d0d0" />
          </g>

          <text class="head" x="393.500" y="653" textLength="41" fill="#f09aa0">Trigger</text>
          <text class="head" x="394.500" y="864" textLength="61" fill="#f07818">Horizontal</text>

          <g v-for="d in dials" :key="d.c" :transform="`translate(0 ${d.dy})`">
            <rect :x="d.x - .5" y="673.500" :width="d.w + 1" height="80" fill="#a8a8a8" stroke="#f0f0f0" /><rect :x="d.x + .5" y="674.500" :width="d.w - 1.500" height="78" fill="none" stroke="#000" />
            <rect :x="d.x + 6" y="676" :width="d.w - 12" height="75" fill="url(#drum)" stroke="#555" stroke-width=".6" />
            <path v-for="k in 25" :key="k" :d="`M${d.x + 6.500} ${676.500 + (k - 1) * 3}h${k % 5 === 3 ? 4 : 2}M${d.x + d.w - 6.500} ${676.500 + (k - 1) * 3}h${k % 5 === 3 ? -4 : -2}`" stroke="#555" stroke-width=".5" />
            <text v-for="(t, k) in d.v" :key="t" class="num" :x="d.x + d.w / 2" :y="695.300 + k * 20">{{ t }}</text>
            <path :d="`M${d.x + 1} 708l5 4.500-5 4.500zM${d.x + d.w - 1.500} 708l-5 4.500 5 4.500z`" fill="#f00000" />
            <path :d="`M${d.ax - 3.500} 708.500L${d.ax} 701l3.500 7.500zM${d.ax - 3.500} 716L${d.ax} 723.500l3.500-7.500zM${d.ax - .6} 706h1.200v12h-1.200z`" :fill="d.c" />
          </g>

          <text class="lbl m" x="381.500" y="670.500">Level</text>
          <text class="lbl e" x="425.500" y="677">AC</text><text class="lbl e" x="425.500" y="691">DC</text>
          <g v-for="s in [{ y: 664, h: 32, k: 680, a: 669, b: 680 }, { y: 708, h: 34, k: 710, a: 725, b: 735 }]" :key="s.y" shape-rendering="crispEdges">
            <rect x="427.500" :y="s.y + .5" width="14" :height="s.h" fill="#b4b4b4" stroke="#f0f0f0" /><rect x="428.500" :y="s.y + .5" width="12" :height="s.h - 1" fill="none" stroke="#000" />
            <rect x="433" :y="s.a" width="2.500" :height="s.b - s.a" /><rect x="429.500" :y="s.k + .5" width="9" height="14" fill="#d8d8d8" stroke="#555" />
            <path v-for="k in 5" :key="k" :d="`M431 ${s.k + k * 2.500}h7`" stroke="#777" />
          </g>
          <path d="M417 722.500h3.500V713h4M417 727.500h3.500v10h3.500" fill="none" stroke="#555" stroke-width="1.500" />
          <g v-for="b in trigButtons" :key="b[0]">
            <text class="lbl e" x="425" :y="b[2]">{{ b[0] }}</text>
            <rect x="427.500" :y="b[1] + .5" width="14" height="13" :fill="b[0] === 'Auto' ? 'url(#lit)' : 'url(#btn)'" stroke="#e8e8e8" /><path :d="`M428 ${b[1] + 13.500}h13.500v-13`" fill="none" stroke="#000" />
          </g>
          <text class="lbl m" x="396.500" y="816">Source</text>
          <text v-for="(l, i) in letters" :key="l[0]" class="let" :x="376.700 + i * 14.500" y="827" :fill="l[1]">{{ l[0] }}</text>
          <text class="lbl m" x="396" y="886">Source</text>
          <text v-for="(l, i) in letters" :key="'h' + l[0]" class="let" :x="382.300 + i * 14.600" y="895" :fill="l[1]">{{ l[0] }}</text>
          <path d="M363 894l10-6v6" fill="none" stroke="#f07818" stroke-width="1.500" />
          <g v-for="s in [{ x: 365, y: 830, w: 63 }, { x: 358, y: 898, w: 78 }]" :key="s.x" shape-rendering="crispEdges">
            <rect :x="s.x + .5" :y="s.y + .5" :width="s.w" height="13" fill="#b4b4b4" stroke="#f0f0f0" /><rect :x="s.x + 1.500" :y="s.y + 1.500" :width="s.w - 2" height="11" fill="none" stroke="#000" />
            <rect :x="s.x + 16" :y="s.y + 6" :width="s.w - 22" height="2" /><rect :x="s.x + 2.500" :y="s.y + 2.500" width="14" height="9" fill="#d8d8d8" stroke="#555" />
            <path v-for="k in 4" :key="k" :d="`M${s.x + 2 + k * 3} ${s.y + 4}v7`" stroke="#666" />
          </g>
          <text class="lbl m" x="396.300" y="924">Position</text>
          <rect x="358.500" y="927.500" width="79" height="20" fill="#a8a8a8" stroke="#f0f0f0" /><rect x="359.500" y="928.500" width="77" height="20" fill="none" stroke="#000" />
          <rect x="360" y="934" width="76" height="10" fill="url(#hdrum)" /><path v-for="k in 24" :key="k" :d="`M${359 + k * 3.100} 934v4`" stroke="#333" stroke-width=".7" />
          <path d="M391.500 928.500h9.500l-4.700 4.500z" fill="#f00000" />

          <g v-for="c in channels" :key="c.n" :transform="`translate(${c.dx} ${c.dy})`">
            <text class="head" x="490" y="653" textLength="57" :fill="c.c">Channel {{ c.n }}</text>
            <text class="lbl m" x="474.200" y="670.500">Position</text>
            <text v-for="(t, k) in ['AC', 'DC', 'GND', 'OFF']" :key="t" class="lbl e" x="519.500" :y="677 + k * 14">{{ t }}</text>
            <g shape-rendering="crispEdges">
              <rect x="521.500" y="663.500" width="14" height="63" fill="#b4b4b4" stroke="#f0f0f0" /><rect x="522.500" y="664.500" width="12" height="61" fill="none" stroke="#000" />
              <rect x="527" y="679" width="2" height="42" /><rect x="523.500" y="665.500" width="10" height="14" fill="#d8d8d8" stroke="#555" />
              <path v-for="k in 5" :key="k" :d="`M525 ${665 + k * 2.500}h7`" stroke="#777" />
            </g>
            <g v-if="c.mix">
              <text class="lbl e" x="519.500" y="738">Invert</text><text class="lbl e" x="519.500" y="754.500">{{ c.mix }}</text>
              <path d="M448 843V799.300A44 44 0 0 1 536 799.300V843H511V815H472V843z" fill="#fff" stroke="#666" stroke-width=".8" />
              <path d="M506 774l8-12" stroke="#a0a0a0" stroke-width="3" /><path d="M504.500 773l8-13.500" stroke="#222" stroke-width=".9" /><path d="M507.500 775.500l8-12.500" stroke="#444" stroke-width=".7" />
              <path v-for="b in [728.500, 744.500]" :key="b" :d="`M521.500 ${b}h14v14h-14z`" fill="url(#btn)" stroke="#e8e8e8" />
              <path d="M522 742.500h13.500V729M522 758.500h13.500V745" fill="none" stroke="#000" />
              <path v-for="t in ticks" :key="t" :transform="`rotate(${t} 491.700 799.300)`" d="M520 799.300h6" stroke="#333" stroke-width=".9" />
              <path d="M473 829l4-12h29l4 12z" fill="#a8a8a8" />
              <circle cx="491.700" cy="799.300" r="29.300" fill="url(#knob)" stroke="#444" stroke-width="1.200" />
              <circle cx="491.700" cy="799.300" r="15" fill="url(#cap)" stroke="#777" stroke-width="1.800" />
              <path d="M464 799.300l9-5v10zM494.700 807l4.500-4 1.800 6z" :fill="c.c" stroke="#6668" stroke-width=".4" />
              <text v-for="m in dialMarks" :key="m[0] + m[1]" class="dm" :x="345 + m[1] / 3" :y="607.800 + m[2] / 3">{{ m[0] }}</text>
              <text class="lbl m" x="459" y="838.500">V</text><text class="lbl m" x="523.500" y="838.500">mV</text>
              <rect x="474.500" y="830.500" width="34" height="13" fill="#fff" stroke="#ddd" /><path d="M474.500 844V830.500H509" fill="none" stroke="#000" />
              <text x="476.500" y="839" font-size="9" fill="#000080">5</text>
            </g>
          </g>
        </svg>
      </div>
    </div>
  </div>
</template>

<style>
html, body { margin: 0; overflow: hidden; }
</style>

<style scoped>
.desk { position: relative; width: 1221px; height: 938px; overflow: hidden; background: linear-gradient(90deg, #141517, #1d1e20); font-family: "Liberation Sans", Arial, sans-serif; }
.window { margin-left: 8px; padding-top: 3px; height: 935px; display: flex; flex-direction: column; background: #fff linear-gradient(#202020, #202020) no-repeat 0 0 / 100% 3px; }
.title { display: flex; align-items: center; height: 28px; }
.logo { margin: 0 5px 0 8px; }
.spacer { flex: 1; }
.winbtns { margin-right: 28px; }
.menu { display: flex; gap: 14px; height: 20px; padding-left: 7px; align-items: flex-end; }
.menu svg { margin-bottom: -1px; }
.bars { display: flex; height: 30px; padding: 0 0 0 1px; box-sizing: border-box; background: linear-gradient(90deg, #e1e8ef, #e9f2f9); border-top: 2px solid #f0f0f0; }
.bar { display: flex; flex: none; height: 26px; box-sizing: border-box; background: linear-gradient(#e9f3f9 0%, #dcedf7 45%, #b6daed 92%, #a4c6da 100%); border-right: 1px solid #9fc3da; }
.grip { flex: none; width: 3px; margin: 1px 3px 0 3px; background: repeating-linear-gradient(#a9bac6 0 2px, #f4fafd 2px 4px); }
.cell { display: flex; flex: none; width: 22px; height: 22px; margin-top: 1px; align-items: center; justify-content: center; box-sizing: border-box; }
.cell svg, .tcell svg { overflow: visible; }
.on { background: linear-gradient(#a9cde4, #d3eaf7); border: 1px solid #6f9fc0; box-sizing: border-box; }
.sep { flex: none; width: 1px; height: 17px; margin: 4px 3px 0 4px; background: #8a9aa6; box-shadow: 1px 0 #fff; }
.sep.wide { margin-right: 4px; }
.combo { display: flex; align-items: center; justify-content: space-between; width: 97px; height: 21px; margin: 2px 0 0 2px; padding: 0 4px 0 3px; box-sizing: border-box; background: #e1e1e1; border: 1px solid #a0a0a0; }
.tabs { height: 26px; padding-top: 2px; box-sizing: border-box; background: linear-gradient(90deg, #e1e8ef, #e9f2f9); border-bottom: 1px solid #7fa8c2; }
.tab { position: relative; width: 179px; height: 24px; }
.tabshape { position: absolute; left: 0; top: 0; }
.tabin { position: relative; display: flex; align-items: center; height: 24px; padding-left: 22px; gap: 4px; }
.tabin svg:last-child { margin-left: 5px; margin-top: 2px; }
.strip { height: 7px; background: #bedcee; }
.body { display: flex; flex: 1; min-height: 0; background: #b5d0e2; }
.tools { display: flex; flex-direction: column; width: 28px; background: linear-gradient(90deg, #e6f4fb, #b8dcf0); }
.hgrip { flex: none; height: 3px; margin: 3px 2px 4px 2px; background: repeating-linear-gradient(90deg, #a9bac6 0 2px, #f4fafd 2px 4px); }
.hgrip.low { margin-top: 5px; }
.tcell { display: flex; flex: none; align-items: center; justify-content: center; width: 22px; height: 21px; margin-left: 2px; box-sizing: border-box; }
.hsep { flex: none; height: 1px; margin: 1px 2px 2px 4px; background: #8a9aa6; box-shadow: 0 1px #fff; }
.side { width: 124px; display: flex; flex-direction: column; }
.overview { display: block; background: #dedece; border: 1px solid #707478; flex: none; }
.devices { flex: 1; margin-top: 4px; border: 1px solid #707478; background: #fff; }
.dhead { display: flex; align-items: center; height: 22px; background: linear-gradient(#e9f4fb, #b6dbee); border-bottom: 1px solid #0078d7; }
.dhead b { width: 15px; height: 15px; margin-left: 3px; margin-right: 3px; border-radius: 2px; background: #0a4bd8; color: #fff; font: 700 14px/15px "Liberation Sans", sans-serif; text-align: center; }
.dhead svg { margin-left: 18px; }
.devices ul { margin: 0; padding: 1px 0 0; list-style: none; height: 100%; border-left: 1px solid #0078d7; border-right: 1px solid #0078d7; }
.devices li { height: 13px; padding-left: 2px; }
.devices li svg { position: relative; top: -2px; }
.sel { background: #0078d7; }
.split { width: 4px; background: #b2c8da; }
.right { flex: 1; min-width: 0; border-left: 1px solid #666; border-top: 1px solid #666; box-sizing: border-box; display: flex; flex-direction: column; overflow: hidden; }
.sheet { display: block; flex: none; background: #dedece; }
.status { flex: 1; border-top: 1px solid #666; background: #dcebf4; display: flex; align-items: center; padding-left: 517px; }
.status i { width: 1px; height: 10px; background: #9fc3da; }
.sgrip { width: 2px; height: 8px; margin-left: 9px; background: repeating-linear-gradient(#a9bac6 0 2px, #f4fafd 2px 4px); }
.part text { font-size: 9px; fill: #222; }
.part .big { font-size: 13px; }
.e { text-anchor: end; }
.m { text-anchor: middle; }
.part rect { fill: #c8c8aa; stroke: #800000; stroke-width: 2; }
.part circle { fill: none; stroke: #004000; stroke-width: 1.800; }
.r { fill: none; stroke: #800000; stroke-width: 1.800; }
.g { fill: none; stroke: #004000; stroke-width: 1.800; }
.lab text { font: 700 9px "DejaVu Sans", sans-serif; }
.scope { position: absolute; left: 0; top: 609px; width: 632px; height: 329px; background: #fff; box-shadow: 0 0 12px rgba(0, 0, 0, .5); }
.stitle { display: flex; justify-content: space-between; height: 25px; padding-right: 1px; }
.stitle svg { margin-top: 3px; margin-left: -1px; }
.close { width: 19px; height: 19px; margin-top: 2px; background: #c75050; color: #fff; font: 700 10px/18px "Open Sans", sans-serif; text-align: center; }
.sbody { display: flex; }
.sbody svg { display: block; flex: none; }
.head { font: 700 13px Roboto, sans-serif; text-anchor: middle; }
.lbl { font-size: 9.300px; fill: #333; }
.num { font-size: 9.300px; fill: #223; text-anchor: middle; }
.let { font-size: 9px; font-weight: 700; text-anchor: middle; }
.dm { font-size: 7.700px; fill: #222; text-anchor: middle; }
</style>
